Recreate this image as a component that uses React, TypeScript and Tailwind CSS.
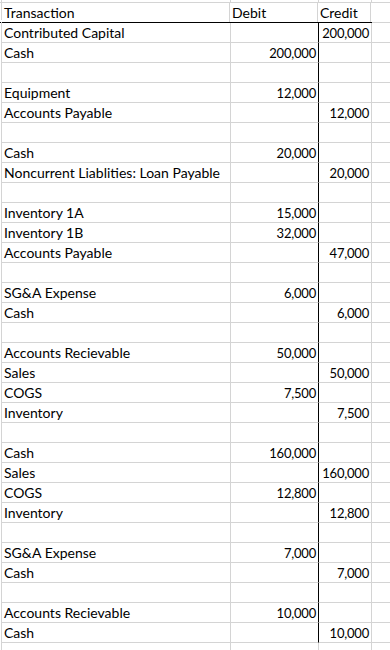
import React from "react";

type Row = [string, string, string];

const rows: Row[] = [
  ["Contributed Capital", "", "200,000"],
  ["Cash", "200,000", ""],
  ["", "", ""],
  ["Equipment", "12,000", ""],
  ["Accounts Payable", "", "12,000"],
  ["", "", ""],
  ["Cash", "20,000", ""],
  ["Noncurrent Liablities: Loan Payable", "", "20,000"],
  ["", "", ""],
  ["Inventory 1A", "15,000", ""],
  ["Inventory 1B", "32,000", ""],
  ["Accounts Payable", "", "47,000"],
  ["", "", ""],
  ["SG&A Expense", "6,000", ""],
  ["Cash", "", "6,000"],
  ["", "", ""],
  ["Accounts Recievable", "50,000", ""],
  ["Sales", "", "50,000"],
  ["COGS", "7,500", ""],
  ["Inventory", "", "7,500"],
  ["", "", ""],
  ["Cash", "160,000", ""],
  ["Sales", "", "160,000"],
  ["COGS", "12,800", ""],
  ["Inventory", "", "12,800"],
  ["", "", ""],
  ["SG&A Expense", "7,000", ""],
  ["Cash", "", "7,000"],
  ["", "", ""],
  ["Accounts Recievable", "10,000", ""],
  ["Cash", "", "10,000"],
];

const font = { fontFamily: "Lato, 'Open Sans', sans-serif" };

export default function App() {
  return (
    <div className="w-[390px] h-[650px] overflow-hidden bg-white text-black text-[14px] leading-none" style={font}>
      {/* top sliver of the row above */}
      <div className="flex h-[2px] ml-[1px] border-l border-[#d4d4d4]">
        <div className="w-[229px] border-r border-[#d4d4d4]" />
        <div className="w-[88px] border-r border-[#d4d4d4]" />
        <div className="w-[53px] border-r border-[#d4d4d4]" />
        <div className="flex-1" />
      </div>
      <div className="border-t border-[#d4d4d4]">
        {/* header */}
        <div className="flex h-[20px] border-b border-black w-[372px]">
          <div className="w-[230px] border-r border-[#d4d4d4] pl-[4px] flex items-end pb-[2px]">
            <div className="w-[1px] self-stretch bg-[#d4d4d4] -ml-[3px] mr-[2px]" />
            Transaction
          </div>
          <div className="w-[88px] border-r border-[#d4d4d4] pl-[2px] flex items-end pb-[2px]">
            Debit
          </div>
          <div className="w-[53px] border-r border-[#d4d4d4] pl-[2px] flex items-end pb-[2px]">
            Credit
          </div>
        </div>
      </div>
      <div className="ml-[1px] border-l border-[#d4d4d4] -mt-[1px] pt-[1px]">
        <div className="flex h-0">
          <div className="w-[229px]" />
          <div className="w-[88px]" />
          <div className="w-[53px]" />
          <div className="flex-1 border-b border-[#d4d4d4] -mt-[1px]" />
        </div>
        {rows.map((r, i) => (
          <div key={i} className="flex h-[20px]">
            <div className="w-[229px] border-r border-b border-[#d4d4d4] pl-[2px] flex items-end pb-[2px] whitespace-nowrap">
              {r[0]}
            </div>
            <div className="w-[88px] border-r border-b border-r-black border-b-[#d4d4d4] pr-[2px] flex items-end justify-end pb-[2px] text-[13px] tracking-[-0.2px]">
              {r[1]}
            </div>
            <div className="w-[53px] border-r border-b border-[#d4d4d4] pr-[2px] flex items-end justify-end pb-[2px] text-[13px] tracking-[-0.2px]">
              {r[2]}
            </div>
            <div className="flex-1 border-b border-[#d4d4d4]" />
          </div>
        ))}
        <div className="flex h-[20px]">
          <div className="w-[229px] border-r border-[#d4d4d4]" />
          <div className="w-[88px] border-r border-[#d4d4d4]" />
          <div className="w-[53px] border-r border-[#d4d4d4]" />
          <div className="flex-1" />
        </div>
      </div>
    </div>
  );
}
